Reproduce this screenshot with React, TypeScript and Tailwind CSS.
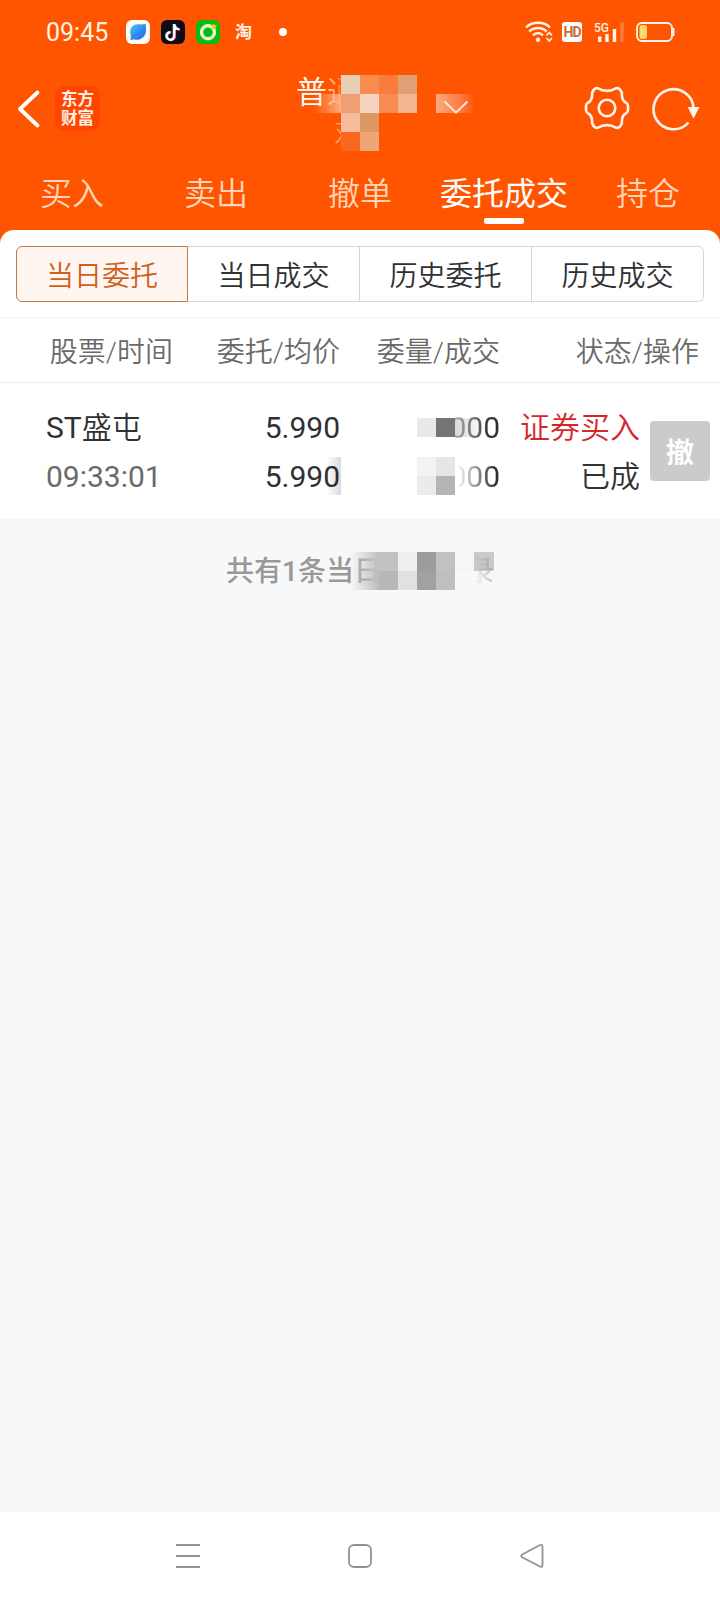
import clsx from "clsx";

const TABS = ["买入", "卖出", "撤单", "委托成交", "持仓"];
const SEGMENTS = ["当日委托", "当日成交", "历史委托", "历史成交"];

function StatusBar() {
  return (
    <div className="flex h-16 items-center pl-[46px] pr-[45px] text-[#fff3e6]">
      <span className="w-[80px] pt-px text-[25px] leading-8">09:45</span>
      <svg width="24" height="24" viewBox="0 0 24 24" className="mr-[11px]">
        <defs>
          <linearGradient id="planet" x1="0" y1="0" x2="1" y2="1">
            <stop offset="0" stopColor="#41c4f8" />
            <stop offset="1" stopColor="#2860e8" />
          </linearGradient>
        </defs>
        <rect width="24" height="24" rx="6" fill="#fdf9f5" />
        <path
          d="M6 6.5C8.500 4 12 3.800 14.500 4.600L19.500 4C20.300 4.200 19.800 5.800 19.600 7C21 12 19 16 16 18C13.500 20 10 20.300 8 19.200C6 20 4.300 20.300 4.400 19.200L5 16C3.700 12.500 4 9 6 6.500Z"
          fill="url(#planet)"
        />
        <path d="M5 16.500C11 15.500 17 11 19.600 6.500" stroke="#2875e8" strokeWidth=".8" fill="none" />
      </svg>
      <svg width="24" height="24" viewBox="0 0 24 24" className="mr-[11px]">
        <rect width="24" height="24" rx="6" fill="#100b18" />
        <g fill="none" strokeWidth="2.200">
          <path d="M12.700 4V15.500A3.800 3.800 0 1 1 9 12M12.700 4.500C13.300 7 15.500 9 18 9" stroke="#35d8dc" />
          <path d="M14 4.500V16A3.800 3.800 0 1 1 10.300 12.500M14 5C14.500 7.700 16.500 9.500 19 9.600" stroke="#f4355c" />
          <path d="M13.300 4V15.700A3.800 3.800 0 1 1 9.500 12.200M13.300 4.500C13.900 7.300 16 9.200 18.500 9.300" stroke="#fff" />
        </g>
      </svg>
      <svg width="24" height="24" viewBox="0 0 24 24" className="mr-[15px]">
        <rect width="24" height="24" rx="6" fill="#06bd0c" />
        <circle cx="12" cy="12.300" r="6.500" fill="none" stroke="#dcf8d5" strokeWidth="3.400" />
        <path d="M17.800 3l1 2.200 2.500.3-1.800 1.700.5 2.500-2.200-1.200-2.200 1.200.4-2.500-1.800-1.700 2.500-.3z" fill="#f8c71c" />
      </svg>
      <span className="w-[17px] text-[17px] font-bold leading-6">淘</span>
      <i className="ml-[27px] size-2 rounded-full bg-white" />

      <svg width="28" height="22" viewBox="0 0 28 22" className="ml-auto">
        <g fill="none" stroke="currentColor" strokeWidth="2.500">
          <path d="M1 6.500C7 .3 19 .3 25 6.500" />
          <path d="M4.300 10.500C9 5.800 17 5.800 21.700 10.500" />
          <path d="M8 14.300C11 11.500 15 11.500 18 14.300" />
        </g>
        <circle cx="13" cy="18.800" r="2.200" fill="currentColor" />
        <path d="M21.500 14.500L24.300 11.500L27 14.500M21.500 17L24.300 20L27 17" fill="none" stroke="currentColor" strokeWidth="1.800" />
      </svg>
      <span className="ml-[9px] flex h-5 w-5 items-center justify-center rounded-[3px] bg-white text-[14px] font-bold tracking-[-1px] text-[#c96a35]">
        HD
      </span>
      <svg width="30" height="22" viewBox="0 0 30 22" className="ml-3">
        <text x="0" y="11" fontSize="12.500" fontWeight="500" textLength="15" lengthAdjust="spacingAndGlyphs" fill="currentColor">
          5G
        </text>
        <g stroke="currentColor" strokeWidth="3.400">
          <path d="M5.700 15.500V21M13 13V21M20.500 8V21" />
          <path d="M28 1.500V21" opacity=".25" />
        </g>
      </svg>
      <svg width="39" height="20" viewBox="0 0 39 20" className="ml-[12px]">
        <rect x="1" y="1" width="35" height="18" rx="5" fill="none" stroke="currentColor" strokeWidth="2" />
        <rect x="3.500" y="3" width="7.500" height="14" rx="2.500" fill="#ffd968" />
        <path d="M37.500 6V14" stroke="currentColor" strokeWidth="2" />
      </svg>
    </div>
  );
}

// Account title, mostly hidden behind mosaic tiles.
function AccountTitle() {
  return (
    <>
      <div className="absolute left-[296px] top-[9px] text-[31px] leading-[40px] font-[350] text-white">
        普
        <span className="bg-gradient-to-r from-white/75 to-transparent to-60% bg-clip-text text-transparent">
          通
        </span>
      </div>
      <div className="absolute left-[334px] top-[54px] bg-gradient-to-r from-white/50 to-transparent bg-clip-text text-[25px] leading-[30px] font-[350] text-transparent">
        对
      </div>
      <div className="absolute left-[313px] top-[11px] grid grid-cols-[28px_repeat(4,19px)] auto-rows-[19px]">
        <i className="col-start-2 bg-[#e8cfb3]" />
        <i className="bg-[#f98c51]" />
        <i className="bg-[#fb7c3a]" />
        <i className="bg-[#e0a074]" />
        <i className="bg-gradient-to-r from-transparent to-[#ffc9a6]/75" />
        <i className="bg-[#eea072]" />
        <i className="bg-[#f6d4bf]" />
        <i className="bg-[#f98c54]" />
        <i className="bg-[#f4b691]" />
        <i className="col-start-2 bg-[#f5bca0]" />
        <i className="bg-[#dd9761]" />
        <i className="col-start-2 bg-[#fa681f]" />
        <i className="bg-[#eda678]" />
      </div>
      <div className="absolute left-[436px] top-[30px] h-[19px] w-[38px] bg-gradient-to-r from-[#f6ac7e] to-[#ff5500]">
        <svg width="26" height="14" viewBox="0 0 26 14" className="ml-[7px] mt-[6px]">
          <path d="M1.500 1.500L13 12.500L24.500 1.500" fill="none" stroke="#ffe4d2" strokeWidth="2" />
        </svg>
      </div>
    </>
  );
}

function TitleBar() {
  return (
    <div className="relative flex h-[88px] items-center pl-[17px] pr-[18px]">
      <svg width="24" height="40" viewBox="0 0 24 40" className="mt-[2px]">
        <path d="M20.500 3.500L3 20L20.500 36.500" fill="none" stroke="#fff" strokeWidth="3.800" strokeLinecap="round" strokeLinejoin="round" />
      </svg>
      <div className="ml-[14px] mt-px flex h-[45px] w-[45px] flex-col items-center justify-center rounded-[9px] bg-[#ff4500] text-[16.500px] font-bold leading-[19px] text-[#ffeee4]">
        <span>东方</span>
        <span>财富</span>
      </div>

      <AccountTitle />

      <svg width="46" height="46" viewBox="-23 -23 46 46" className="ml-auto" fill="none" stroke="#fff5ec" strokeWidth="2.600" strokeLinejoin="round">
        <path d="M-13-18.500Q-11-20.500-8.500-19.500C-4-16.300 4-16.300 8.500-19.500Q11-20.500 13-18.500L14.800-15.500C14.500-9 16-6.500 19.500-5Q21-4 21-2V2Q21 4 19.500 5C16 6.500 14.500 9 14.800 15.500L13 18.500Q11 20.500 8.500 19.500C4 16.300-4 16.300-8.500 19.500Q-11 20.500-13 18.500L-14.800 15.500C-14.500 9-16 6.500-19.500 5Q-21 4-21 2V-2Q-21-4-19.500-5C-16-6.500-14.500-9-14.800-15.500Z" />
        <circle r="8.300" />
      </svg>
      <svg width="50" height="46" viewBox="0 0 50 46" className="ml-[22px] mt-[2px]">
        <path d="M41.500 22A20 20 0 1 0 36.500 36.500" fill="none" stroke="#fff5ec" strokeWidth="2.600" />
        <path d="M35.700 21H47.500L41.500 32.500Z" fill="#fff5ec" />
      </svg>
    </div>
  );
}

function Tabs() {
  return (
    <div className="grid h-[78px] grid-cols-5 pt-[18px] text-[32px] leading-[48px]">
      {TABS.map((tab) => {
        const active = tab === "委托成交";
        return (
          <div
            key={tab}
            className={clsx(
              "flex flex-col items-center",
              active ? "text-white" : "font-[350] text-[#ffd4b8]",
            )}
          >
            {tab}
            {active && <i className="h-[6px] w-10 rounded-[2px] bg-white" />}
          </div>
        );
      })}
    </div>
  );
}

function OrderRow() {
  return (
    <div className="grid h-[136px] grid-cols-[340px_160px_140px_80px] pt-5 text-[30px] leading-[49px] text-[#303133]">
      <div className="flex justify-between pl-[46px]">
        <div>
          <div>
            ST<span className="font-[350]">盛屯</span>
          </div>
          <div className="text-[#6a6a6a]">09:33:01</div>
        </div>
        <div className="relative text-right">
          <div>5.990</div>
          <div>5.990</div>
          <i className="absolute -right-px top-[54px] h-[38px] w-[15px] bg-gradient-to-r from-transparent to-black/15" />
        </div>
      </div>
      <div className="relative text-right">
        <div>
          <span className="bg-gradient-to-r from-[#303133]/15 to-[#303133] to-80% bg-clip-text text-transparent">
            000
          </span>
        </div>
        <div>
          <span className="bg-gradient-to-r from-[#303133]/0 from-15% to-[#303133] to-90% bg-clip-text text-transparent">
            000
          </span>
        </div>
        <div className="absolute left-[77px] top-[15px] grid grid-cols-[19px_19px_30px] auto-rows-[19px]">
          <i className="bg-[#e9e9e9]" />
          <i className="bg-[#757575]" />
          <i className="bg-gradient-to-r from-black/15 to-transparent" />
        </div>
        <div className="absolute left-[77px] top-[54px] grid grid-cols-[19px_19px] auto-rows-[19px]">
          <i className="bg-[#f3f3f3]" />
          <i className="bg-[#e6e6e6]" />
          <i className="bg-[#ebebeb]" />
          <i className="bg-[#b5b5b5]" />
        </div>
      </div>
      <div className="text-right font-[350]">
        <div className="text-[#d7262b]">证券买入</div>
        <div>已成</div>
      </div>
      <button className="ml-[10px] mt-[18px] h-[60px] w-[60px] rounded bg-[#cbcbcb] pt-[5px] text-[28px] font-bold text-white">
        撤
      </button>
    </div>
  );
}

function Summary() {
  return (
    <div className="relative flex-1 bg-[#f7f8fa] pt-[33px] pl-[226px] text-[28px] font-medium leading-[40px] text-[#999]">
      共有1条当
      <span className="bg-gradient-to-r from-[#999] to-[#999]/60 bg-clip-text text-transparent">日</span>
      <div className="absolute left-[350px] top-[33px] grid grid-cols-[29px_repeat(5,19px)] auto-rows-[19px]">
        <i className="bg-gradient-to-r from-transparent to-[#bfc2c1]" />
        <i className="bg-[#c0c3c2]" />
        <i className="bg-[#eeeff0]" />
        <i className="bg-[#9c9c9c]" />
        <i className="bg-[#c0c2c2]" />
        <i className="bg-[#f6f6f7]" />
        <i className="bg-gradient-to-r from-transparent to-[#bcbebe]" />
        <i className="bg-[#b8b8b8]" />
        <i className="bg-[#dfe1e2]" />
        <i className="bg-[#a1a1a1]" />
        <i className="bg-[#bec0c0]" />
        <i className="bg-[#f8f8f9]" />
      </div>
      <i className="absolute left-[474px] top-[33px] h-[19px] w-5 bg-[#c8c9c9]" />
      {/* the last glyph fades in from the left */}
      <div className="absolute left-[466px] top-[33px] bg-gradient-to-r from-transparent from-30% to-[#999]/60 bg-clip-text text-transparent">
        录
      </div>
    </div>
  );
}

function NavBar() {
  return (
    <div className="flex h-[88px] items-center justify-between bg-white px-[175px]">
      <svg width="26" height="26" viewBox="0 0 26 26" stroke="#929292" strokeWidth="2">
        <path d="M1 2H25M1 13H25M1 24H25" />
      </svg>
      <svg width="26" height="26" viewBox="0 0 26 26" fill="none" stroke="#929292" strokeWidth="1.800">
        <rect x="2" y="2" width="22" height="22" rx="5" />
      </svg>
      <svg width="26" height="26" viewBox="0 0 26 26" fill="none" stroke="#929292" strokeWidth="1.800" strokeLinejoin="round">
        <path d="M3.200 11.500L20.500 2.300Q23.500 1 23.500 3.800V21.700Q23.500 24.700 20.500 23.300L3.200 14.300Q1.300 12.900 3.200 11.500Z" />
      </svg>
    </div>
  );
}

export default function App() {
  return (
    <div className="flex h-[1600px] w-[720px] flex-col overflow-hidden bg-[#ff5500] font-[Roboto,'Noto_Sans_CJK_SC',sans-serif]">
      <StatusBar />
      <TitleBar />
      <Tabs />

      <div className="rounded-t-[14px] bg-white px-4 pt-4">
        <div className="grid h-14 grid-cols-4 text-center text-[28px] font-[350] leading-[59px] text-[#303133]">
          {SEGMENTS.map((label, i) => (
            <div
              key={label}
              className={clsx(
                "h-14 border",
                i === 0
                  ? "rounded-l-[6px] border-[#c07a45] bg-[#fff6f2] text-[#d0601c]"
                  : "border-l-0 border-[#d6d9da]",
                i === 3 && "rounded-r-[6px]",
              )}
            >
              {label}
            </div>
          ))}
        </div>
      </div>

      <div className="bg-white pt-[15px]">
        <div className="grid h-[66px] grid-cols-[173px_167px_160px_199px] border-y border-t-[#f5f5f5] border-b-[#ececec] text-right text-[28px] font-[350] leading-[70px] text-[#6a6a6a]">
          <span>股票/时间</span>
          <span>委托/均价</span>
          <span>委量/成交</span>
          <span>状态/操作</span>
        </div>
        <OrderRow />
      </div>

      <Summary />
      <NavBar />
    </div>
  );
}
